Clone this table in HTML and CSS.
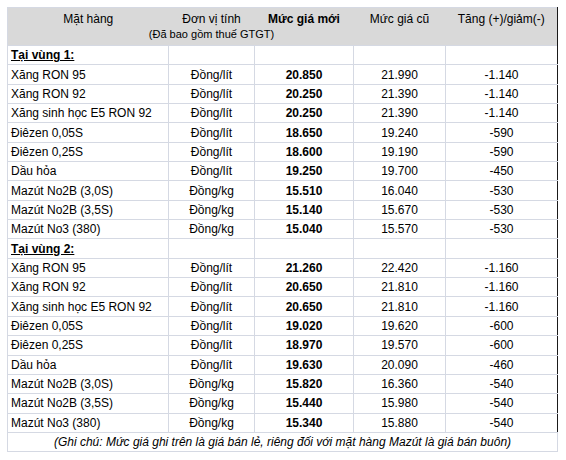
FILE: index.html
```html
<!DOCTYPE html>
<html lang="vi">
<head>
<meta charset="utf-8">
<title>Bảng giá xăng dầu</title>
<link rel="stylesheet" href="styles.css">
</head>
<body>
<div class="wrap">
<table class="price">
  <colgroup>
    <col class="c1"><col class="c2"><col class="c3"><col class="c4"><col class="c5">
  </colgroup>
  <thead>
    <tr class="hr1">
      <th class="first">Mặt hàng</th>
      <th>Đơn vị tính</th>
      <th class="bold">Mức giá mới</th>
      <th>Mức giá cũ</th>
      <th class="last">Tăng (+)/giảm(-)</th>
    </tr>
    <tr class="hr2">
      <th class="first"></th>
      <th><div class="overflow">(Đã bao gồm thuế GTGT)</div></th>
      <th></th>
      <th></th>
      <th class="last"></th>
    </tr>
  </thead>
  <tbody>
    <tr class="region"><td class="name">Tại vùng 1:</td><td></td><td></td><td></td><td class="last"></td></tr>
    <tr><td class="name">Xăng RON 95</td><td>Đồng/lít</td><td class="bold">20.850</td><td>21.990</td><td class="last">-1.140</td></tr>
    <tr><td class="name">Xăng RON 92</td><td>Đồng/lít</td><td class="bold">20.250</td><td>21.390</td><td class="last">-1.140</td></tr>
    <tr><td class="name">Xăng sinh học E5 RON 92</td><td>Đồng/lít</td><td class="bold">20.250</td><td>21.390</td><td class="last">-1.140</td></tr>
    <tr><td class="name">Điêzen 0,05S</td><td>Đồng/lít</td><td class="bold">18.650</td><td>19.240</td><td class="last">-590</td></tr>
    <tr><td class="name">Điêzen 0,25S</td><td>Đồng/lít</td><td class="bold">18.600</td><td>19.190</td><td class="last">-590</td></tr>
    <tr><td class="name">Dầu hỏa</td><td>Đồng/lít</td><td class="bold">19.250</td><td>19.700</td><td class="last">-450</td></tr>
    <tr><td class="name">Mazút No2B (3,0S)</td><td>Đồng/kg</td><td class="bold">15.510</td><td>16.040</td><td class="last">-530</td></tr>
    <tr><td class="name">Mazút No2B (3,5S)</td><td>Đồng/kg</td><td class="bold">15.140</td><td>15.670</td><td class="last">-530</td></tr>
    <tr><td class="name">Mazút No3 (380)</td><td>Đồng/kg</td><td class="bold">15.040</td><td>15.570</td><td class="last">-530</td></tr>
    <tr class="region"><td class="name">Tại vùng 2:</td><td></td><td></td><td></td><td class="last"></td></tr>
    <tr><td class="name">Xăng RON 95</td><td>Đồng/lít</td><td class="bold">21.260</td><td>22.420</td><td class="last">-1.160</td></tr>
    <tr><td class="name">Xăng RON 92</td><td>Đồng/lít</td><td class="bold">20.650</td><td>21.810</td><td class="last">-1.160</td></tr>
    <tr><td class="name">Xăng sinh học E5 RON 92</td><td>Đồng/lít</td><td class="bold">20.650</td><td>21.810</td><td class="last">-1.160</td></tr>
    <tr><td class="name">Điêzen 0,05S</td><td>Đồng/lít</td><td class="bold">19.020</td><td>19.620</td><td class="last">-600</td></tr>
    <tr><td class="name">Điêzen 0,25S</td><td>Đồng/lít</td><td class="bold">18.970</td><td>19.570</td><td class="last">-600</td></tr>
    <tr><td class="name">Dầu hỏa</td><td>Đồng/lít</td><td class="bold">19.630</td><td>20.090</td><td class="last">-460</td></tr>
    <tr><td class="name">Mazút No2B (3,0S)</td><td>Đồng/kg</td><td class="bold">15.820</td><td>16.360</td><td class="last">-540</td></tr>
    <tr><td class="name">Mazút No2B (3,5S)</td><td>Đồng/kg</td><td class="bold">15.440</td><td>15.980</td><td class="last">-540</td></tr>
    <tr class="final"><td class="name">Mazút No3 (380)</td><td>Đồng/kg</td><td class="bold">15.340</td><td>15.880</td><td class="last">-540</td></tr>
  </tbody>
  <tfoot>
    <tr class="note-row"><td class="note" colspan="5">(Ghi chú: Mức giá ghi trên là giá bán lẻ, riêng đối với mặt hàng Mazút là giá bán buôn)</td></tr>
  </tfoot>
</table>
</div>
</body>
</html>
```
FILE: styles.css
```css
html, body {
  margin: 0;
  padding: 0;
  background: #ffffff;
}

body {
  font-family: "Liberation Sans", Arial, sans-serif;
  font-size: 12px;
  color: #000000;
}

.wrap {
  padding: 7px 0 0 7px;
}

.price {
  border-collapse: collapse;
  table-layout: fixed;
  width: 551px;
}

.c1 { width: 161px; }
.c2 { width: 86px; }
.c3 { width: 99px; }
.c4 { width: 92px; }
.c5 { width: 112px; }

.price th,
.price td {
  padding: 0 3px;
  white-space: nowrap;
  text-align: center;
  vertical-align: middle;
  line-height: 14px;
  font-weight: normal;
}

.price tbody td,
.price tfoot td {
  border: 1px solid #d5d9e3;
}

.price thead th {
  background: #d9d9d9;
  border: none;
  border-top: 1px solid #d5d9e3;
}

.price thead tr.hr2 th {
  border-top: none;
}

.price thead th.first {
  border-left: 1px solid #d5d9e3;
}

.price th.last,
.price td.last {
  border-right: 1px solid #1a1a1a;
}

.hr1 { height: 20px; }
.hr2 { height: 18px; }

.price tbody tr { height: 19.35px; }

.price .name {
  text-align: left;
  padding-left: 3px;
}

.price .bold {
  font-weight: bold;
}

.region .name {
  font-weight: bold;
  text-decoration: underline;
}

.overflow {
  display: flex;
  justify-content: center;
  font-size: 11px;
  line-height: 13px;
}

.hr1 th { vertical-align: middle; padding-top: 2px; }
.hr2 th { vertical-align: top; }

.final td {
  border-bottom: 1px solid #1a1a1a;
}

.note-row { height: 19px; }

.price td.note {
  font-style: italic;
  text-align: center;
  border-top: none;
  border-right: 1px solid #d5d9e3;
}
```
